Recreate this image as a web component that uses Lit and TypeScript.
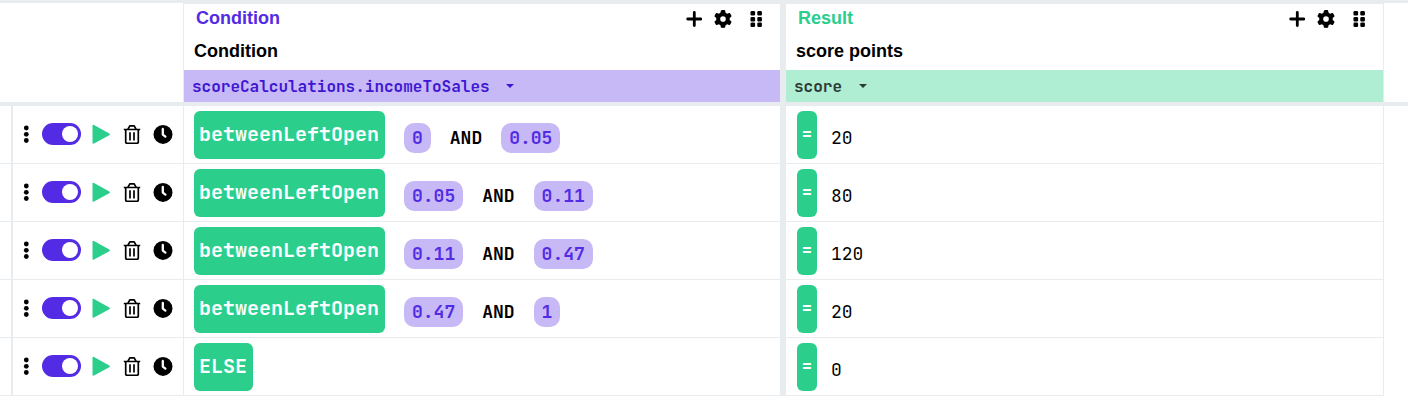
import { LitElement, html, css, svg, nothing } from "lit";
import { customElement, state } from "lit/decorators.js";

interface Rule {
  operator: string;
  values: string[];
  score: string;
  enabled: boolean;
}

const more = svg`<svg width="6" height="20" viewBox="0 0 6 20" aria-hidden="true"><circle cx="3.300" cy="4" r="2.400"/><circle cx="3.300" cy="10.300" r="2.400"/><circle cx="3.300" cy="16.500" r="2.400"/></svg>`;
const play = svg`<svg width="20" height="20" viewBox="-1 -.5 20 20" aria-hidden="true"><path d="M.5 1.300Q.5-.3 2 .5L17.300 9q1.200.9 0 1.800L2 19Q.5 19.700.5 18.200z" fill="#2bcf8b"/></svg>`;
const trash = svg`<svg width="18" height="20" viewBox="0 0 18 20" fill="none" stroke="#000" stroke-width="1.700" aria-hidden="true"><path d="M.8 5.500h16.400M5 5.200l1.200-2.400Q6.500 1.900 7.500 1.900h3q1 0 1.300.9L13 5.200M2.700 5.700v12.300q0 1.300 1.300 1.300h10q1.300 0 1.300-1.300V5.700M7 8.300v8.200M11 8.300v8.200"/></svg>`;
const clock = svg`<svg width="20" height="20" viewBox="0 0 20 20" aria-hidden="true"><circle cx="10" cy="10.400" r="9.500"/><path d="M9.800 5v5.600l2.600 2" fill="none" stroke="#fff" stroke-width="2.300" stroke-linecap="round" stroke-linejoin="round"/></svg>`;
const plus = svg`<svg width="16" height="16" viewBox="0 0 16 16" fill="none" stroke="#000" stroke-width="2.800" stroke-linecap="round" aria-hidden="true"><path d="M8.300 1.400v13.200M1.700 8h13.200"/></svg>`;
const gear = svg`<svg width="18" height="18" viewBox="0 0 512 512" aria-hidden="true"><path d="M495.900 166.600c3.200 8.700.5 18.400-6.400 24.600l-43.300 39.400c1.100 8.300 1.700 16.800 1.700 25.400s-.6 17.100-1.700 25.400l43.300 39.400c6.900 6.200 9.600 15.900 6.400 24.600-4.400 11.900-9.700 23.300-15.800 34.300l-4.700 8.100c-6.600 11-14 21.400-22.100 31.200-5.900 7.200-15.700 9.600-24.500 6.800l-55.700-17.700c-13.400 10.300-28.200 18.900-44 25.400l-12.500 57.100c-2 9.100-9 16.300-18.200 17.800-13.800 2.300-28 3.500-42.500 3.500s-28.700-1.200-42.500-3.500c-9.200-1.500-16.200-8.700-18.200-17.800l-12.500-57.100c-15.800-6.500-30.600-15.100-44-25.400l-55.600 17.800c-8.800 2.800-18.600.3-24.500-6.800-8.100-9.800-15.500-20.200-22.100-31.200l-4.700-8.100c-6.100-11-11.400-22.400-15.800-34.300-3.200-8.700-.5-18.400 6.400-24.600l43.300-39.400c-1.200-8.400-1.800-16.900-1.800-25.500s.6-17.100 1.700-25.400l-43.300-39.400c-6.900-6.200-9.600-15.900-6.400-24.600 4.400-11.900 9.700-23.300 15.800-34.300l4.700-8.100c6.600-11 14-21.400 22.100-31.200 5.900-7.200 15.700-9.600 24.500-6.800l55.700 17.700c13.400-10.300 28.200-18.900 44-25.400l12.500-57.100c2-9.100 9-16.300 18.200-17.800C227.300 1.200 241.500 0 256 0s28.700 1.200 42.500 3.500c9.200 1.500 16.200 8.700 18.200 17.800l12.500 57.100c15.800 6.500 30.600 15.100 44 25.400l55.700-17.700c8.800-2.800 18.600-.3 24.500 6.800 8.100 9.800 15.500 20.200 22.100 31.200l4.700 8.100c6.100 11 11.400 22.400 15.800 34.300zM256 336a80 80 0 1 0 0-160 80 80 0 1 0 0 160z"/></svg>`;
const grip = svg`<svg width="12" height="16" viewBox="0 0 12 16" aria-hidden="true">${[0, 6, 11.5].map(
  (y) => svg`<rect x=".5" y=${y} width="4.600" height="4.400" rx="1.200"/><rect x="7.300" y=${y} width="4.600" height="4.400" rx="1.200"/>`,
)}</svg>`;
const caret = svg`<svg class="caret" width="8" height="4" viewBox="0 0 8 4" aria-hidden="true"><path d="M0 0h8L4 4z" fill="currentColor"/></svg>`;

@customElement("app-root")
export class DecisionTable extends LitElement {
  static styles = css`
    :host {
      display: block;
      background: #fff;
      color: #000;
      --line: #e9ecef;
      --purple: #532be4;
      --green: #2bcf8b;
      --mono: "JetBrains Mono", "DejaVu Sans Mono", monospace;
      font-family: "Liberation Sans", Arial, sans-serif;
    }
    *, *::before {
      box-sizing: border-box;
    }
    .table {
      width: 100%;
      table-layout: fixed;
      border-collapse: separate;
      border-spacing: 0;
    }
    .col-handle { width: 13px; }
    .col-actions { width: 170px; }
    .col-gap { width: 6px; }
    .col-end { width: 25px; }
    th, td {
      padding: 0;
      text-align: left;
      vertical-align: top;
    }
    .head {
      border-top: 4px solid var(--line);
      border-bottom: 4px solid var(--line);
    }
    .side {
      border-top-width: 3px;
    }
    .cell {
      height: 58px;
      border-bottom: 1px solid var(--line);
    }
    .ruled {
      border-left: 1px solid var(--line);
    }
    .handle {
      border-right: 2px solid var(--line);
    }
    .gap {
      background: var(--line);
    }
    button {
      display: flex;
      align-items: center;
      justify-content: center;
      padding: 0;
      border: 0;
      background: none;
      color: inherit;
      font: inherit;
      cursor: pointer;
    }
    .title-bar {
      display: flex;
      align-items: center;
      justify-content: space-between;
      height: 30px;
      padding: 0 5px 0 12px;
      font-size: 18px;
      line-height: 28px;
    }
    .name {
      height: 30px;
      color: var(--purple);
    }
    .result .name {
      color: var(--green);
    }
    .tools {
      display: flex;
    }
    .tool {
      width: 29px;
      height: 30px;
    }
    .wide {
      width: 38px;
    }
    .subtitle {
      height: 36px;
      padding-left: 10px;
      font-size: 18px;
      line-height: 34px;
    }
    .band {
      display: flex;
      height: 32px;
      padding-left: 8px;
      background: #c7b9f6;
      color: #3d17d1;
    }
    .result .band {
      background: #afeed3;
      color: #2b3a35;
    }
    .picker {
      display: grid;
      align-items: center;
    }
    .field {
      grid-area: 1 / 1;
      height: 32px;
      padding: 0 24px 0 0;
      border: 0;
      appearance: none;
      background: none;
      color: inherit;
      font: bold 16px var(--mono);
      cursor: pointer;
    }
    .caret {
      grid-area: 1 / 1;
      justify-self: end;
      pointer-events: none;
    }
    .actions {
      display: grid;
      grid-template-columns: 26px 46px 31px 31px 31px;
      align-items: center;
      height: 56px;
    }
    .action {
      height: 32px;
    }
    .switch {
      display: flex;
      align-items: center;
      width: 39px;
      height: 22px;
      margin: 0 0 0 3px;
      padding: 3px;
      border-radius: 11px;
      appearance: none;
      background: #b9bdc6;
      cursor: pointer;
    }
    .switch::before {
      content: "";
      width: 16px;
      height: 16px;
      border-radius: 50%;
      background: #fff;
    }
    .switch:checked {
      justify-content: flex-end;
      background: var(--purple);
    }
    .rule {
      display: flex;
      align-items: center;
      gap: 19px;
      height: 57px;
      padding-left: 10px;
      font: 18px var(--mono);
    }
    .outcome {
      gap: 14px;
      padding-left: 11px;
    }
    .operator {
      height: 48px;
      padding: 0 6px 2px 5px;
      border-radius: 6px;
      background: var(--green);
      color: #fff;
      font-size: 20px;
      font-weight: bold;
    }
    .equals {
      width: 20px;
      padding: 0 0 2px;
      font-size: 18px;
    }
    .values {
      display: flex;
      align-items: center;
      gap: 19px;
      padding-top: 6px;
      font-weight: bold;
    }
    .chip {
      height: 30px;
      padding: 0 8px;
      border-radius: 10px;
      background: #c7b9f6;
      color: var(--purple);
    }
    .score {
      padding-top: 6px;
    }
  `;

  @state() private rules: Rule[] = [
    { operator: "betweenLeftOpen", values: ["0", "0.05"], score: "20", enabled: true },
    { operator: "betweenLeftOpen", values: ["0.05", "0.11"], score: "80", enabled: true },
    { operator: "betweenLeftOpen", values: ["0.11", "0.47"], score: "120", enabled: true },
    { operator: "betweenLeftOpen", values: ["0.47", "1"], score: "20", enabled: true },
    { operator: "ELSE", values: [], score: "0", enabled: true },
  ];

  private toggle(index: number) {
    this.rules = this.rules.map((r, i) => (i === index ? { ...r, enabled: !r.enabled } : r));
  }

  private header(kind: string, name: string, subtitle: string, field: string) {
    return html`<th class="head ${kind}" scope="col">
      <div class="title-bar">
        <span class="name">${name}</span>
        <span class="tools">
          <button class="tool" aria-label="Add column">${plus}</button>
          <button class="tool" aria-label="Column settings">${gear}</button>
          <button class="tool wide" aria-label="Move column">${grip}</button>
        </span>
      </div>
      <div class="subtitle">${subtitle}</div>
      <div class="band">
        <label class="picker">
          <select class="field" aria-label="${name} field"><option>${field}</option></select>
          ${caret}
        </label>
      </div>
    </th>`;
  }

  private row(rule: Rule, index: number) {
    return html`<tr>
      <td class="cell handle"></td>
      <td class="cell">
        <div class="actions">
          <button class="action" aria-label="More">${more}</button>
          <input class="switch" type="checkbox" role="switch" aria-label="Rule enabled"
            .checked=${rule.enabled} @change=${() => this.toggle(index)} />
          <button class="action" aria-label="Run">${play}</button>
          <button class="action" aria-label="Delete">${trash}</button>
          <button class="action" aria-label="Schedule">${clock}</button>
        </div>
      </td>
      <td class="cell ruled">
        <div class="rule">
          <button class="operator">${rule.operator}</button>
          ${rule.values.length
            ? html`<div class="values">
                <button class="chip">${rule.values[0]}</button>
                <span>AND</span>
                <button class="chip">${rule.values[1]}</button>
              </div>`
            : nothing}
        </div>
      </td>
      <td class="gap"></td>
      <td class="cell">
        <div class="rule outcome">
          <button class="operator equals">=</button>
          <span class="score">${rule.score}</span>
        </div>
      </td>
      <td class="ruled"></td>
    </tr>`;
  }

  render() {
    return html`<table class="table">
      <colgroup>
        <col class="col-handle" /><col class="col-actions" /><col />
        <col class="col-gap" /><col /><col class="col-end" />
      </colgroup>
      <thead>
        <tr>
          <td class="head side" colspan="2"></td>
          ${this.header("ruled", "Condition", "Condition", "scoreCalculations.incomeToSales")}
          <td class="gap"></td>
          ${this.header("result", "Result", "score points", "score")}
          <td class="head side ruled"></td>
        </tr>
      </thead>
      <tbody>${this.rules.map((r, i) => this.row(r, i))}</tbody>
    </table>`;
  }
}
